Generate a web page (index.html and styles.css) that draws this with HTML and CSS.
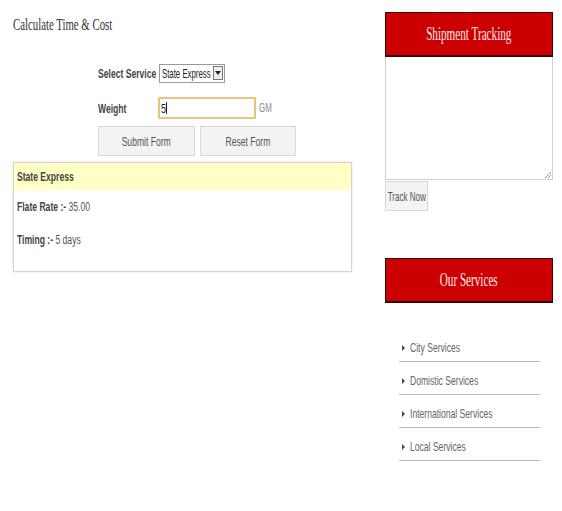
FILE: index.html
```html
<!DOCTYPE html>
<html>
<head>
<meta charset="utf-8">
<link rel="stylesheet" href="styles.css">
</head>
<body>
<div class="page">
  <div class="main">
    <h1 class="title"><span class="sq sq-left">Calculate Time &amp; Cost</span></h1>
    <form class="calc">
      <div class="row row-select">
        <label class="lbl"><span class="sq sq-left">Select Service</span></label>
        <div class="select"><span class="sel-text"><span class="sq sq-left">State Express</span></span><span class="sel-arrow"><svg width="6" height="4" viewBox="0 0 6 4"><path d="M0 0h6L3 4z" fill="#222"/></svg></span></div>
      </div>
      <div class="row row-weight">
        <label class="lbl"><span class="sq sq-left">Weight</span></label>
        <div class="input"><span class="val">5</span><span class="caret"></span></div>
        <span class="unit"><span class="sq sq-left">GM</span></span>
      </div>
      <div class="buttons">
        <span class="btn btn-submit"><span class="sq">Submit Form</span></span>
        <span class="btn btn-reset"><span class="sq">Reset Form</span></span>
      </div>
    </form>
    <div class="result">
      <div class="result-head"><span class="sq sq-left">State Express</span></div>
      <div class="result-line"><span class="sq sq-left"><b>Flate Rate :-</b> 35.00</span></div>
      <div class="result-line"><span class="sq sq-left"><b>Timing :-</b> 5 days</span></div>
    </div>
  </div>
  <div class="side">
    <div class="panel-head"><span class="sq sq-head">Shipment Tracking</span></div>
    <div class="textarea"><svg class="grip" width="7" height="7" viewBox="0 0 7 7"><path d="M7 1L1 7M7 4L4 7" stroke="#999" stroke-width="1"/></svg></div>
    <span class="btn btn-track"><span class="sq">Track Now</span></span>
    <div class="panel-head panel-services"><span class="sq sq-head">Our Services</span></div>
    <ul class="services">
      <li><span class="sq sq-left">City Services</span></li>
      <li><span class="sq sq-left">Domistic Services</span></li>
      <li><span class="sq sq-left">International Services</span></li>
      <li><span class="sq sq-left">Local Services</span></li>
    </ul>
  </div>
</div>
</body>
</html>
```
FILE: styles.css
```css
html, body { margin: 0; padding: 0; background: #fff; }
body { font-family: "Liberation Sans", Arial, sans-serif; font-size: 13px; color: #555; }
.page { display: flex; width: 562px; height: 511px; }
.main { width: 339px; margin-left: 13px; }
.side { width: 168px; margin-left: 33px; padding-top: 12px; }
.sq { display: inline-block; transform: scaleX(0.66); transform-origin: center; white-space: nowrap; }
.sq-left { transform-origin: left center; }
.title { margin: 13px 0 0 0; height: 24px; font-family: "Liberation Serif", serif; font-weight: normal; font-size: 17px; color: #333; line-height: 24px; }
.title .sq { transform: scaleX(0.635); }
.sq-head { transform: scaleX(0.62); }
.calc { padding-left: 85px; margin-top: 26px; }
.row { display: flex; align-items: center; }
.lbl { width: 61px; font-weight: bold; color: #444; white-space: nowrap; }
.row-select { height: 20px; }
.select { display: flex; align-items: center; width: 64px; height: 17px; border: 1px solid #999; background: #fff; color: #222; }
.sel-text { width: 50px; padding-left: 2px; overflow: visible; }
.sel-text .sq { transform: scaleX(0.6); }
.sel-arrow { width: 8px; height: 12px; margin-left: auto; margin-right: 1px; border: 1px solid #777; background: #eee; display: flex; align-items: center; justify-content: center; }
.row-weight { margin-top: 14px; height: 22px; }
.input { width: 93px; height: 18px; border: 2px solid #e8c577; border-radius: 1px; padding-left: 1px; color: #222; display: flex; align-items: center; margin-left: -1px; }
.val { display: inline-block; transform: scaleX(0.7); transform-origin: left center; }
.caret { width: 1px; height: 12px; background: #222; margin-left: -2px; }
.unit { margin-left: 3px; color: #888; font-size: 12px; width: 20px; }
.buttons { display: flex; gap: 5px; margin-top: 7px; }
.btn { display: inline-flex; align-items: center; justify-content: center; box-sizing: border-box; background: #f3f3f3; border: 1px solid #d8d8d8; color: #555; white-space: nowrap; }
.btn-submit { width: 97px; height: 30px; }
.btn-reset { width: 96px; height: 30px; }
.result { margin-top: 6px; height: 110px; box-sizing: border-box; border: 1px solid #d4d4d4; box-shadow: 0 0 2px #ddd; }
.result-head { background: #ffffc6; height: 27px; line-height: 28px; padding-left: 3px; font-weight: bold; color: #444; }
.result-line { padding-left: 3px; line-height: 16px; margin-top: 9px; }
.result-line + .result-line { margin-top: 17px; }
.result-line b { color: #444; }
.panel-head { height: 45px; box-sizing: border-box; background: #cc0000; border: 1px solid #3a0000; border-bottom-width: 2px; color: #fde8e8; font-family: "Liberation Serif", serif; font-size: 18px; display: flex; align-items: center; justify-content: center; }
.textarea { position: relative; height: 123px; box-sizing: border-box; border: 1px solid #d0d0d0; border-top: none; }
.grip { position: absolute; right: 1px; bottom: 1px; }
.btn-track { width: 43px; height: 30px; margin-top: 1px; overflow: hidden; }
.btn-track .sq { transform: scaleX(0.62); }
.panel-services { margin-top: 47px; }
.services { list-style: none; margin: 26px 0 0 14px; padding: 0; width: 141px; }
.services li { height: 32px; line-height: 14px; border-bottom: 1px solid #bbb; padding-left: 11px; position: relative; color: #666; display: flex; align-items: flex-end; }
.services li .sq { margin-bottom: 6px; }
.services li::before { content: ""; position: absolute; left: 3px; bottom: 10px; border-left: 3px solid #444; border-top: 3px solid transparent; border-bottom: 3px solid transparent; }
```
